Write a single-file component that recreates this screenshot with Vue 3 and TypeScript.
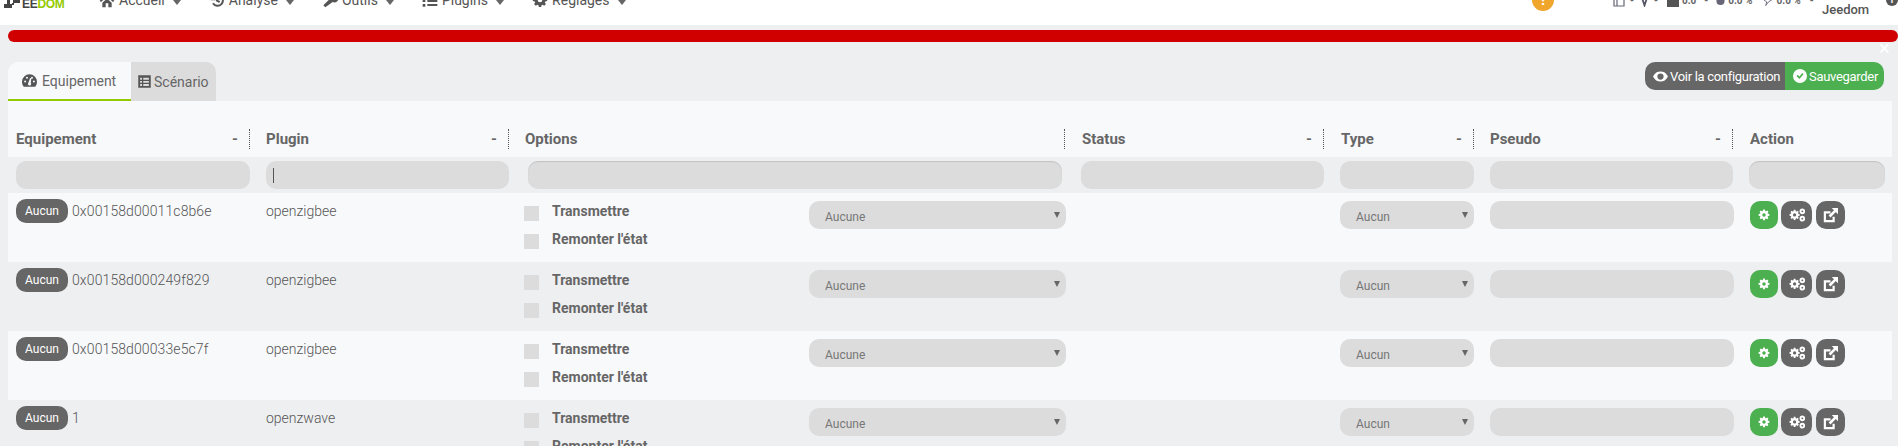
<script setup lang="ts">
interface Row { name: string; plugin: string }
const rows: Row[] = [
  { name: '0x00158d00011c8b6e', plugin: 'openzigbee' },
  { name: '0x00158d000249f829', plugin: 'openzigbee' },
  { name: '0x00158d00033e5c7f', plugin: 'openzigbee' },
  { name: '1', plugin: 'openzwave' },
]
const columns = [
  { label: 'Equipement', w: 250, sort: true },
  { label: 'Plugin', w: 259, sort: true },
  { label: 'Options', w: 556, sort: false },
  { label: 'Status', w: 259, sort: true },
  { label: 'Type', w: 150, sort: true },
  { label: 'Pseudo', w: 259, sort: true },
  { label: 'Action', w: 151, sort: false },
]
const nav = ['Accueil', 'Analyse', 'Outils', 'Plugins', 'Réglages']
const cog = 'M10.2 1h3.6l.5 2.9 1.6.7 2.4-1.7 2.6 2.6-1.7 2.4.7 1.6 2.9.5v3.6l-2.9.5-.7 1.6 1.7 2.4-2.6 2.6-2.4-1.7-1.6.7-.5 2.9h-3.6l-.5-2.9-1.6-.7-2.4 1.7-2.6-2.6 1.7-2.4-.7-1.6-2.9-.5v-3.6l2.9-.5.7-1.6-1.7-2.4 2.6-2.6 2.4 1.7 1.6-.7zM12 8.5a3.5 3.5 0 1 0 0 7 3.5 3.5 0 0 0 0-7z'
</script>

<template>
  <div class="page">
    <header class="topbar">
      <div class="brand">
        <svg class="logo" viewBox="0 0 16 8" width="16" height="8"><path d="M0 4h8v4H0zM3 0h3v4H3zM9 0h7v3H9zM8 3h2v2H8z" fill="#444" /></svg>
        <span class="ee">EE</span><span class="dom">DOM</span>
      </div>
      <nav class="nav">
        <a v-for="(item, i) in nav" :key="item" class="nav-item">
          <svg class="nav-icon" viewBox="0 0 24 24" width="16" height="16">
            <path v-if="i === 0" d="M12 3 1 13l2 2 9-8 9 8 2-2-4-3.600V4h-3v2.700zM5 16l7-6 7 6v7h-5v-6h-4v6H5z" fill="#555" />
            <path v-else-if="i === 1" d="M4 5v6h6M5 11a8 8 0 1 1 1 6M12 8v5l4 2" fill="none" stroke="#555" stroke-width="3" />
            <path v-else-if="i === 2" d="M2 20l11-11a6 6 0 0 1 8-6l-4 4 1 3 3 1 3-4a6 6 0 0 1-8 8L5 23z" fill="#555" />
            <path v-else-if="i === 3" d="M1 4h4v4H1zM8 5h15v3H8zM1 11h4v4H1zM8 12h15v3H8zM1 18h4v4H1zM8 18h15v3H8z" fill="#555" />
            <path v-else :d="cog" fill="#555" />
          </svg>
          <span>{{ item }}</span>
          <i class="caret"></i>
        </a>
      </nav>
      <div class="status">
        <span class="alert">!</span>
        <div class="mini">
          <svg class="m-door" viewBox="0 0 12 14" width="12" height="14"><path d="M1 1h10v12H1zM4 1v12" fill="none" stroke="#667" stroke-width="1.200" /></svg>
          <b class="m-a">-</b>
          <svg class="m-b" viewBox="0 0 10 14" width="9" height="14"><path d="M1 1h8L5 13z" fill="none" stroke="#556" stroke-width="2" /></svg>
          <b class="m-a">-</b>
          <svg class="m-c" viewBox="0 0 12 14" width="12" height="14"><path d="M0 6l6-6 6 6v8H0z" fill="#555" /></svg>
          <b class="m-t">0.0</b>
          <b class="m-d">-</b>
          <svg class="m-e" viewBox="0 0 10 14" width="9" height="14"><circle cx="5" cy="8" r="4.500" fill="#667" /></svg>
          <b class="m-t">0.0 %</b>
          <svg class="m-f" viewBox="0 0 12 14" width="11" height="14"><path d="M2 0h9v6L6 9l-3 4 1-4-3-2z" fill="none" stroke="#667" /></svg>
          <b class="m-t">0.0 %</b>
          <b class="m-g">-</b>
        </div>
        <span class="user">Jeedom</span>
        <span class="info">i</span>
      </div>
    </header>

    <div class="redbar"></div>
    <span class="close">×</span>

    <main class="content">
      <div class="toolbar">
        <div class="tabs">
          <a class="tab active">
            <svg viewBox="0 0 24 24" width="15" height="15"><path fill-rule="evenodd" d="M12 2a12 12 0 0 0-12 12c0 3 1 6 3 8h18c2-2 3-5 3-8A12 12 0 0 0 12 2zM5 15a1.600 1.600 0 1 1 0-3.200 1.600 1.600 0 0 1 0 3.200zm3-6a1.600 1.600 0 1 1 0-3.200A1.600 1.600 0 0 1 8 9zm6 10a2.500 2.500 0 0 1-4-3l3-8h2l-1 8c1 1 1 2 0 3zm2-10a1.600 1.600 0 1 1 0-3.200 1.600 1.600 0 0 1 0 3.200zm3 6a1.600 1.600 0 1 1 0-3.200 1.600 1.600 0 0 1 0 3.200z" fill="#555" /></svg>
            Equipement
          </a>
          <a class="tab">
            <svg viewBox="0 0 24 24" width="15" height="15"><path fill-rule="evenodd" d="M2 2h20v20H2zM5 6v3h3V6zm5 0v3h9V6zm-5 5v3h3v-3zm5 0v3h9v-3zm-5 5v3h3v-3zm5 0v3h9v-3z" fill="#555" /></svg>
            Scénario
          </a>
        </div>
        <div class="actions-top">
          <a class="top-btn grey">
            <svg viewBox="0 0 24 24" width="15" height="15"><path fill-rule="evenodd" d="M0 12C3 6 7 4 12 4s9 2 12 8c-3 6-7 8-12 8S3 18 0 12zm12-5a5 5 0 1 0 0 10 5 5 0 0 0 0-10z" fill="#fff" /></svg>
            <span class="tight">Voir la configuration</span>
          </a>
          <a class="top-btn green">
            <svg viewBox="0 0 24 24" width="14" height="14"><path fill-rule="evenodd" d="M12 0a12 12 0 1 0 0 24 12 12 0 0 0 0-24zM6 12l2-2 3 3 5-6 2 2-7 8z" fill="#fff" /></svg>
            <span class="tight">Sauvegarder</span>
          </a>
        </div>
      </div>

      <section class="panel">
        <table class="grid">
          <colgroup>
            <col v-for="c in columns" :key="c.label" :style="{ width: c.w + 'px' }" />
          </colgroup>
          <thead>
            <tr class="head-row">
              <th v-for="(c, i) in columns" :key="c.label">
                <div class="th-in" :class="{ last: i === columns.length - 1 }">
                  <span>{{ c.label }}</span>
                  <span v-if="c.sort" class="sort">-</span>
                </div>
              </th>
            </tr>
            <tr class="filter-row">
              <td v-for="(c, i) in columns" :key="c.label" :class="'f' + i">
                <div class="filter-wrap">
                  <input class="field" :class="{ inset: i === 2 || i === 6 }" type="text" />
                  <span v-if="i === 1" class="text-caret"></span>
                </div>
              </td>
            </tr>
          </thead>
          <tbody>
            <tr v-for="(r, ri) in rows" :key="r.name" :class="ri % 2 === 0 ? 'odd' : 'even'">
              <td class="c-name">
                <span class="badge">Aucun</span><span class="name">{{ r.name }}</span>
              </td>
              <td class="c-plugin">{{ r.plugin }}</td>
              <td class="c-opts">
                <div class="opts">
                  <div class="checks">
                    <label class="check"><i class="box"></i>Transmettre</label>
                    <label class="check"><i class="box"></i>Remonter l'état</label>
                  </div>
                  <div class="select-wrap wide">
                    <select class="field select"><option>Aucune</option></select>
                  </div>
                </div>
              </td>
              <td></td>
              <td class="c-type">
                <div class="select-wrap">
                  <select class="field select"><option>Aucun</option></select>
                </div>
              </td>
              <td class="c-pseudo"><input class="field" type="text" /></td>
              <td class="c-act">
                <div class="act">
                  <a class="icon-btn gr w28">
                    <svg viewBox="0 0 24 24" width="12" height="12"><path :d="cog" fill="#fff" fill-rule="evenodd" /></svg>
                  </a>
                  <a class="icon-btn dk w31">
                    <svg viewBox="0 0 24 24" width="16" height="16">
                      <path transform="translate(0 3.500) scale(.7)" :d="cog" fill="#fff" fill-rule="evenodd" />
                      <circle cx="20" cy="6.500" r="2.800" fill="none" stroke="#fff" stroke-width="2.800" />
                      <circle cx="20" cy="17.500" r="2.800" fill="none" stroke="#fff" stroke-width="2.800" />
                    </svg>
                  </a>
                  <a class="icon-btn dk w29">
                    <svg viewBox="0 0 24 24" width="15" height="15"><path d="M17 14v7H3V7h9" fill="none" stroke="#fff" stroke-width="3.500" /><path d="M14 0h10v10l-3.500-3.500L12 15l-3-3 8.500-8.500z" fill="#fff" /></svg>
                  </a>
                </div>
              </td>
            </tr>
          </tbody>
        </table>
      </section>
    </main>
  </div>
</template>

<style>
html, body { margin: 0; overflow: hidden; background: #eeeff1; }
</style>

<style scoped>
.page {
  position: relative;
  height: 446px;
  overflow: hidden;
  background: #eeeff1;
  font-family: Roboto, "Liberation Sans", sans-serif;
  font-size: 14px;
  color: #666;
}
.topbar {
  height: 25px;
  background: #fff;
  display: flex;
  align-items: flex-start;
  overflow: hidden;
  position: relative;
}
.brand {
  width: 99px;
  margin-top: -2px;
  display: flex;
  align-items: flex-end;
  height: 12px;
  padding-left: 4px;
  box-sizing: border-box;
  font: 700 12px/12px "Liberation Sans", sans-serif;
  letter-spacing: -0.3px;
  flex: none;
}
.logo { margin-right: 2px; margin-bottom: 2px; }
.ee { color: #444; }
.dom { color: #94ca02; }
.nav { display: flex; margin-top: -10px; flex: none; }
.nav-item {
  display: flex;
  align-items: center;
  height: 20px;
  color: #555;
  font-size: 14px;
  gap: 4px;
  margin-right: 28px;
}
.nav-icon { flex: none; }
.caret {
  width: 0;
  height: 0;
  margin-left: 4px;
  margin-top: 4px;
  border: 4px solid transparent;
  border-top: 5px solid #666;
  border-bottom: 0;
}
.status { flex: none; width: 366px; margin-left: auto; position: relative; height: 25px; }
.alert {
  position: absolute;
  left: 0;
  top: -11px;
  width: 22px;
  height: 22px;
  border-radius: 50%;
  background: #f0a52c;
  color: #fff;
  text-align: center;
  font: 700 15px/22px Roboto, sans-serif;
}
.mini {
  position: absolute;
  left: 81px;
  top: -7px;
  display: flex;
  align-items: center;
  font-size: 10px;
  color: #666;
  white-space: nowrap;
}
.m-a { margin: 0 6px 0 5px; }
.m-c { margin-left: 3px; }
.m-t { margin-left: 3px; }
.m-d { margin: 0 8px; }
.m-f { margin-left: 10px; }
.m-g { margin-left: 9px; }
.user {
  position: absolute;
  left: 290px;
  top: 1px;
  font-weight: 500;
  font-size: 13px;
  line-height: 18px;
  color: #555;
}
.info {
  position: absolute;
  left: 354px;
  top: -6px;
  width: 12px;
  height: 12px;
  border-radius: 50%;
  background: #555;
  color: #fff;
  text-align: center;
  font: 700 9px/12px Roboto, sans-serif;
}
.redbar {
  height: 12px;
  margin: 5px 0 0 8px;
  background: #d10000;
  border-radius: 6px;
}
.close {
  position: absolute;
  left: 1879px;
  top: 38px;
  color: #fff;
  font-size: 20px;
  line-height: 20px;
}
.content { padding: 20px 6px 0 8px; }
.toolbar { display: flex; justify-content: space-between; align-items: flex-start; }
.tabs { display: flex; height: 39px; }
.tab {
  display: flex;
  align-items: center;
  gap: 5px;
  box-sizing: border-box;
  height: 39px;
  color: #666;
  font-size: 14px;
}
.tab.active {
  width: 123px;
  padding-left: 14px;
  background: #f8f9fb;
  border-radius: 10px 0 0 0;
  border-bottom: 2px solid #94ca02;
}
.tab:not(.active) {
  width: 85px;
  padding-left: 6px;
  background: #dcdcdc;
  border-radius: 0 10px 0 0;
  gap: 2px;
}
.actions-top { display: flex; margin-right: 8px; height: 28px; }
.top-btn {
  display: flex;
  align-items: center;
  box-sizing: border-box;
  height: 28px;
  color: #fff;
  font-size: 13px;
  gap: 2px;
  white-space: nowrap;
}
.tight { letter-spacing: -0.3px; }
.top-btn.grey { width: 140px; padding-left: 8px; background: #666; border-radius: 10px 0 0 10px; }
.top-btn.green { width: 99px; padding-left: 8px; background: #4caf50; border-radius: 0 10px 10px 0; }
.panel { background: #f8f9fb; padding-top: 28px; }
.grid { width: 1884px; table-layout: fixed; border-collapse: collapse; }
.grid th, .grid td { padding: 0; text-align: left; font-weight: 400; vertical-align: top; }
.head-row { height: 28px; }
.grid th { padding: 0 8px; font-weight: 700; font-size: 15px; color: #666; }
.grid th:nth-child(4), .grid th:nth-child(5), .grid th:nth-child(7) { padding-left: 9px; }
.th-in {
  display: flex;
  justify-content: space-between;
  align-items: center;
  box-sizing: border-box;
  height: 20px;
  padding-right: 11px;
  border-right: 1px dotted #555;
}
.th-in.last { border-right: 0; }
.filter-row { height: 36px; background: #eeeff1; }
.filter-row td { padding: 4px 8px 0; }
.filter-row td.f2 { padding: 4px 11px 0; }
.filter-row td.f6 { padding: 4px 7px 0 8px; }
.filter-wrap { position: relative; }
.field {
  display: block;
  width: 100%;
  height: 28px;
  box-sizing: border-box;
  border: 0;
  outline: 0;
  border-radius: 10px;
  background: #dcdcdc;
  color: #777;
  font-family: Roboto, sans-serif;
  font-size: 12px;
  padding: 0 16px;
}
.inset { box-shadow: inset 0 1px 1px rgba(0, 0, 0, 0.12); }
.text-caret {
  position: absolute;
  left: 7px;
  top: 7px;
  width: 1px;
  height: 15px;
  background: #555;
}
.grid tbody tr { height: 69px; }
.odd { background: #f8f9fb; }
.even { background: #eeeff1; }
.c-name { padding: 6px 0 0 8px !important; white-space: nowrap; }
.badge {
  display: inline-block;
  box-sizing: border-box;
  width: 52px;
  height: 24px;
  line-height: 24px;
  text-align: center;
  border-radius: 10px;
  background: #666;
  color: #fff;
  font-size: 12px;
  vertical-align: top;
}
.name { display: inline-block; margin-left: 4px; line-height: 24px; font-weight: 300; color: #555; vertical-align: top; letter-spacing: 0.1px; }
.c-plugin { padding: 6px 8px 0 !important; line-height: 24px; font-weight: 300 !important; color: #555; }
.c-opts { padding: 0 7px !important; }
.opts { display: flex; justify-content: space-between; }
.checks { padding-top: 4px; }
.check { display: flex; height: 28px; align-items: flex-start; font-weight: 700; color: #666; line-height: 28px; }
.box {
  flex: none;
  width: 15px;
  height: 15px;
  margin: 9px 13px 0 0;
  background: #dcdcdc;
}
.select-wrap { position: relative; margin-top: 8px; }
.select-wrap.wide { width: 257px; }
.select-wrap::after {
  content: "";
  position: absolute;
  right: 6px;
  top: 11px;
  border: 3px solid transparent;
  border-top: 6px solid #666;
  border-bottom: 0;
}
.select { appearance: none; padding-top: 3px; }
.c-type { padding: 0 8px !important; }
.c-pseudo { padding: 8px 7px 0 8px !important; }
.c-act { padding: 8px 0 0 9px !important; }
.act { display: flex; }
.icon-btn {
  display: flex;
  align-items: center;
  justify-content: center;
  height: 28px;
  border-radius: 10px;
}
.gr { background: #4caf50; }
.dk { background: #666; }
.w28 { width: 28px; margin-right: 3px; }
.w31 { width: 31px; margin-right: 4px; }
.w29 { width: 29px; }
</style>
